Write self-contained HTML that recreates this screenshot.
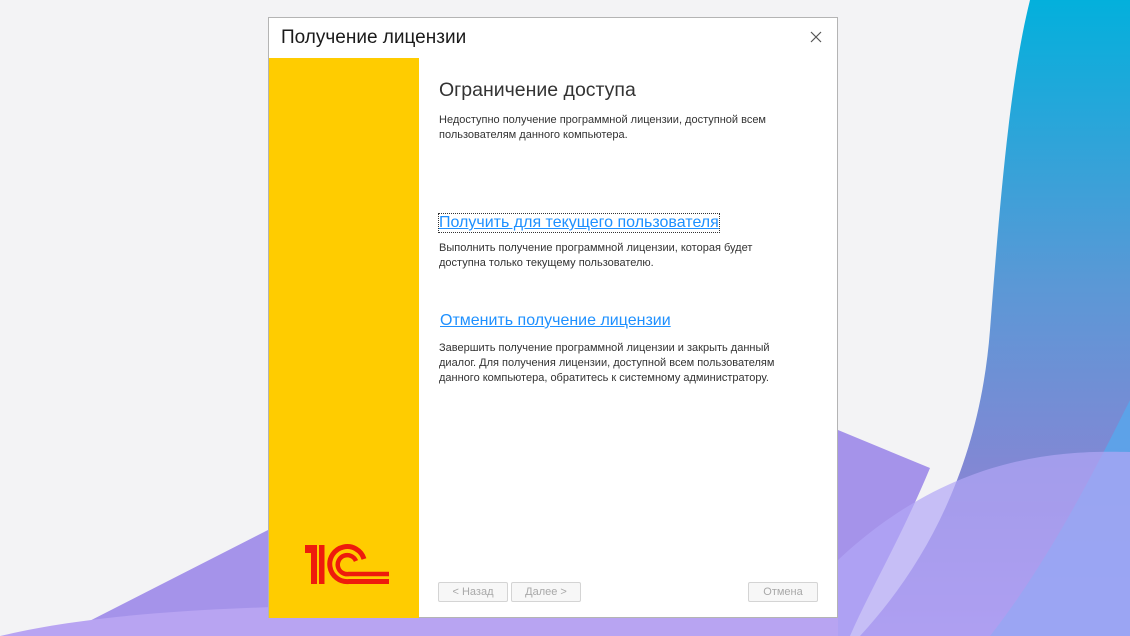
<!DOCTYPE html>
<html><head><meta charset="utf-8"><style>
*{margin:0;padding:0;box-sizing:border-box}
body{width:1130px;height:636px;overflow:hidden;position:relative;background:#f3f3f5;font-family:"Liberation Sans",Arial,sans-serif}
#bg{position:absolute;left:0;top:0}
.dlg{position:absolute;left:268px;top:17px;width:570px;height:601px;background:#fff;border:1px solid #b4b4b4}
.title{position:absolute;left:12px;top:9px;font-size:19px;color:#1a1a1a}
.close{position:absolute;left:541px;top:13px}
.side{position:absolute;left:0;top:40px;width:150px;height:560px;background:#ffcc00}
.c{position:absolute;left:170px;color:#333}
h1{position:absolute;left:170px;top:61px;font-size:19.5px;font-weight:normal;color:#333}
.p{font-size:11px;line-height:15px;color:#333}
a{color:#1e90ff;font-size:16px;text-decoration:underline}
.btn{position:absolute;top:564px;height:20px;border:1px solid #d4d4d4;border-radius:2px;background:#f7f7f7;color:#a8a8a8;font-size:11px;text-align:center;line-height:18px}
</style></head><body>
<svg id="bg" width="1130" height="636">
<defs>
<linearGradient id="b" x1="0" y1="0" x2="0" y2="1"><stop offset="0" stop-color="#03b0dc"/><stop offset=".45" stop-color="#5b98d6"/><stop offset=".8" stop-color="#8a84d4"/><stop offset="1" stop-color="#a58de6"/></linearGradient>
</defs>
<path d="M60 636 L268 530 L268 450 L838 430 L930 468 C900 540 870 590 850 636Z" fill="#a593ea"/>
<path d="M1030 0 H1130 V636 H860 C930 560 980 460 990 330 C1000 200 1010 80 1030 0Z" fill="url(#b)"/>
<path d="M1130 400 L1130 636 L990 636 C1050 560 1100 460 1130 400Z" fill="#56a8ec" opacity=".8"/>
<path d="M838 560 C950 455 1060 450 1130 452 L1130 636 L838 636Z" fill="#b2a6f6" opacity=".7"/>
<path d="M0 636 C150 600 400 600 838 612 V636Z" fill="#b8a4f2"/>
</svg>
<div class="dlg">
<div class="title">Получение лицензии</div>
<svg class="close" width="12" height="12"><path d="M1 1L11 11M11 1L1 11" stroke="#555" stroke-width="1.2"/></svg>
<div class="side"></div>
<svg style="position:absolute;left:0;top:0" width="150" height="600">
<g transform="translate(-268,-17)" fill="none" stroke="#ee1b0c">
<rect x="304" y="544" width="12" height="8" fill="#ee1b0c" stroke="none"/>
<rect x="310" y="544" width="6" height="39" fill="#ee1b0c" stroke="none"/>
<rect x="318" y="544" width="5.5" height="39" fill="#ee1b0c" stroke="none"/>
<path d="M363 558 A17.5 17.5 0 1 0 348 580.5 H388" stroke-width="5"/>
<path d="M355 560 A9.5 9.5 0 1 0 348 573 H388" stroke-width="4.5"/>
</g>
</svg>
<h1>Ограничение доступа</h1>
<div class="c p" style="top:95px">Недоступно получение программной лицензии, доступной всем<br>пользователям данного компьютера.</div>
<div class="c" style="top:196px;outline:1px dotted #333"><a>Получить для текущего пользователя</a></div>
<div class="c p" style="top:223px">Выполнить получение программной лицензии, которая будет<br>доступна только текущему пользователю.</div>
<div class="c" style="top:294px;left:171px"><a>Отменить получение лицензии</a></div>
<div class="c p" style="top:323px">Завершить получение программной лицензии и закрыть данный<br>диалог. Для получения лицензии, доступной всем пользователям<br>данного компьютера, обратитесь к системному администратору.</div>
<div class="btn" style="left:169px;width:70px">&lt; Назад</div>
<div class="btn" style="left:242px;width:70px">Далее &gt;</div>
<div class="btn" style="left:479px;width:70px">Отмена</div>
</div>
</body></html>
